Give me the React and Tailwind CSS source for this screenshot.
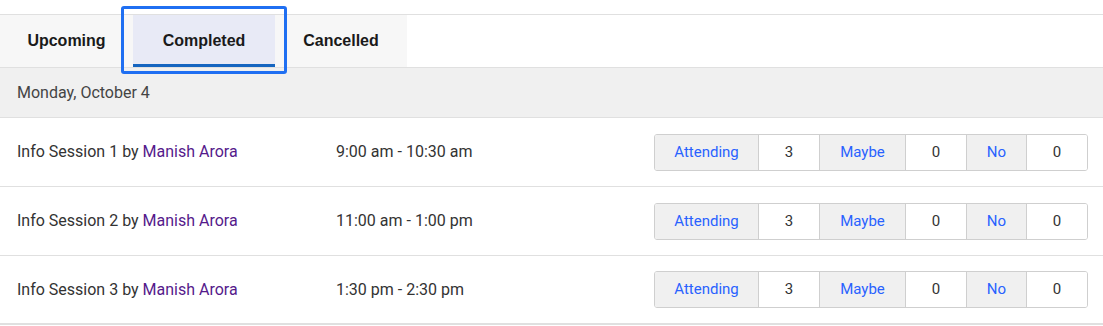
import { useState } from 'react';

const sessions = [
    { id: 1, title: 'Info Session 1', host: 'Manish Arora', time: '9:00 am - 10:30 am', attending: 3, maybe: 0, no: 0 },
    { id: 2, title: 'Info Session 2', host: 'Manish Arora', time: '11:00 am - 1:00 pm', attending: 3, maybe: 0, no: 0 },
    { id: 3, title: 'Info Session 3', host: 'Manish Arora', time: '1:30 pm - 2:30 pm', attending: 3, maybe: 0, no: 0 },
];

const tabs = [
    { key: 'upcoming', label: 'Upcoming', width: 'w-[133px]' },
    { key: 'completed', label: 'Completed', width: 'w-[142px]' },
    { key: 'cancelled', label: 'Cancelled', width: 'w-[132px]' },
];

function RsvpGroup({ s }) {
    return (
        <div className="flex h-[37px] border border-[#cfcfcf] rounded-[3px] overflow-hidden text-[15px]">
            <div className="w-[104px] flex items-center justify-center bg-[#f0f0f0] text-[#2962ff] border-r border-[#cfcfcf]">Attending</div>
            <div className="w-[61px] flex items-center justify-center bg-white text-[#333] border-r border-[#cfcfcf]">{s.attending}</div>
            <div className="w-[86px] flex items-center justify-center bg-[#f0f0f0] text-[#2962ff] border-r border-[#cfcfcf]">Maybe</div>
            <div className="w-[61px] flex items-center justify-center bg-white text-[#333] border-r border-[#cfcfcf]">{s.maybe}</div>
            <div className="w-[60px] flex items-center justify-center bg-[#f0f0f0] text-[#2962ff] border-r border-[#cfcfcf]">No</div>
            <div className="w-[60px] flex items-center justify-center bg-white text-[#333]">{s.no}</div>
        </div>
    );
}

export default function App() {
    const [active, setActive] = useState('completed');

    return (
        <div className="w-full h-[326px] bg-white pt-[14px] overflow-hidden font-['Roboto',sans-serif]">
            <div className="border-t border-[#e0e0e0]">
                <div className="flex h-[52px]">
                    <div className="flex bg-[#f7f7f7]">
                        {tabs.map((t) => (
                            <button
                                key={t.key}
                                onClick={() => setActive(t.key)}
                                className={`relative ${t.width} h-full flex items-center justify-center text-[16px] font-bold text-[#1a1a1a] font-['Liberation_Sans',Arial,sans-serif] ${active === t.key ? 'bg-[#e8eaf6]' : ''}`}
                            >
                                {t.label}
                                {active === t.key && (
                                    <>
                                        <span className="absolute left-0 right-0 bottom-0 h-[3px] bg-[#1565c0]" />
                                        <span className="absolute left-[-12px] right-[-12px] top-[-9px] bottom-[-7px] border-[3px] border-[#1f6ff2] rounded-[3px] pointer-events-none" />
                                    </>
                                )}
                            </button>
                        ))}
                    </div>
                    <div className="flex-1 bg-white" />
                </div>

                <div className="border-t border-b border-[#e0e0e0] bg-[#f0f0f0] h-[51px] flex items-center px-[17px] text-[16px] text-[#444]">
                    Monday, October 4
                </div>

                {sessions.map((s, i) => (
                    <div
                        key={s.id}
                        className={`h-[69px] flex items-center pl-[17px] pr-[15px] text-[16px] text-[#333] border-[#e0e0e0] ${i === sessions.length - 1 ? 'border-b-2' : 'border-b'}`}
                    >
                        <div className="w-[319px]">
                            {s.title} by <a href="#" className="text-[#551a8b]">{s.host}</a>
                        </div>
                        <div>{s.time}</div>
                        <div className="ml-auto">
                            <RsvpGroup s={s} />
                        </div>
                    </div>
                ))}
            </div>
        </div>
    );
}
